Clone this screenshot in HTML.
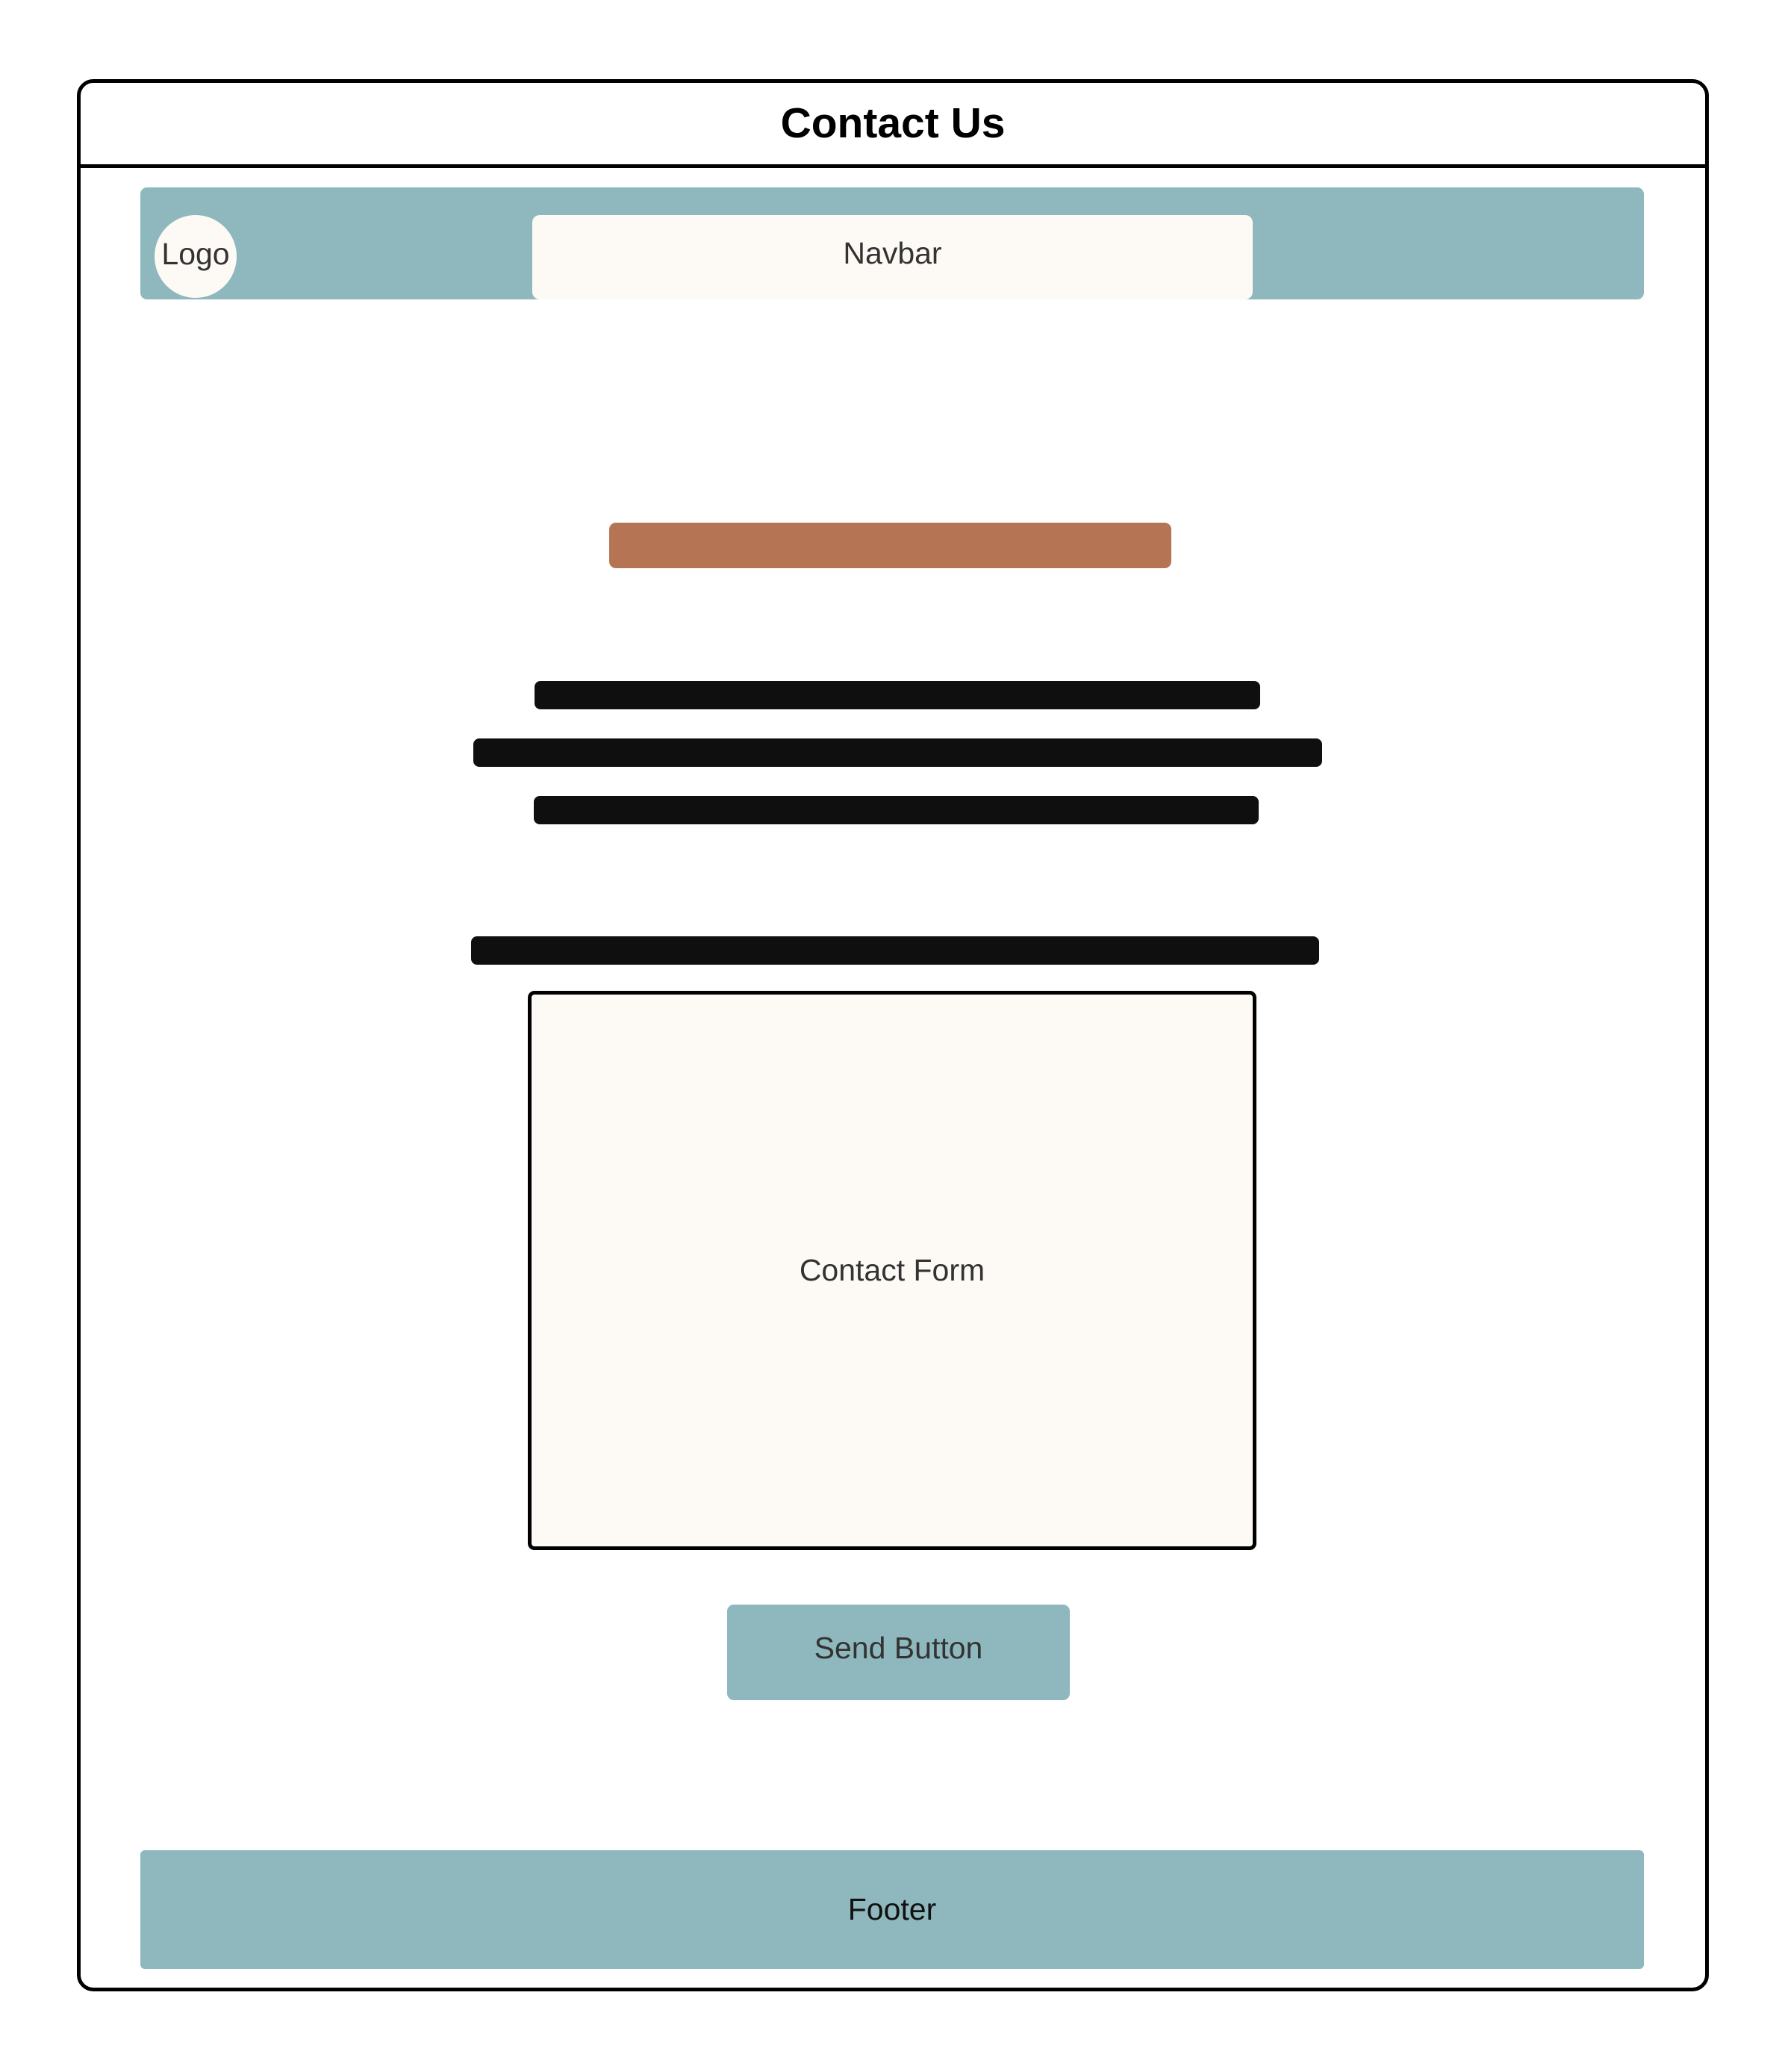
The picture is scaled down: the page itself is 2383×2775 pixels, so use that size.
<!DOCTYPE html>
<html><head><meta charset="utf-8"><style>
html,body{margin:0;padding:0;background:#fff;}
body{width:2383px;height:2775px;position:relative;overflow:hidden;font-family:"Liberation Sans",Arial,sans-serif;}
div{position:absolute;box-sizing:border-box;}
.c{display:flex;align-items:center;justify-content:center;}
.bar{background:#0f0f0f;border-radius:8px;}
</style></head><body>
<div style="left:103px;top:106px;width:2186px;height:2561px;border:5px solid #000;border-radius:22px;"></div>
<div style="left:105px;top:220px;width:2182px;height:5px;background:#000;"></div>
<div class="c" style="left:105px;top:110px;width:2182px;height:109px;font-size:57px;font-weight:bold;color:#000;">Contact Us</div>
<div style="left:188px;top:251px;width:2014px;height:150px;background:#8eb8bd;border-radius:9px;"></div>
<div class="c" style="left:207px;top:288px;width:110px;height:111px;border-radius:50%;background:#fdfaf5;font-size:41px;color:#333;padding-bottom:6px;">Logo</div>
<div class="c" style="left:713px;top:288px;width:965px;height:113px;background:#fdfaf5;border-radius:10px;font-size:41px;color:#333;padding-bottom:10px;">Navbar</div>
<div style="left:816px;top:700px;width:753px;height:61px;background:#b57555;border-radius:9px;"></div>
<div class="bar" style="left:716px;top:912px;width:972px;height:38px;"></div>
<div class="bar" style="left:634px;top:989px;width:1137px;height:38px;"></div>
<div class="bar" style="left:715px;top:1066px;width:971px;height:38px;"></div>
<div class="bar" style="left:631px;top:1254px;width:1136px;height:38px;"></div>
<div class="c" style="left:707px;top:1327px;width:976px;height:749px;border:5px solid #000;border-radius:9px;background:#fdfaf5;font-size:41px;color:#333;">Contact Form</div>
<div class="c" style="left:974px;top:2149px;width:459px;height:128px;background:#8eb8bd;border-radius:9px;font-size:41px;color:#333;padding-bottom:12px;">Send Button</div>
<div class="c" style="left:188px;top:2478px;width:2014px;height:159px;background:#8eb8bd;border-radius:6px;font-size:41px;color:#111;">Footer</div>
</body></html>
